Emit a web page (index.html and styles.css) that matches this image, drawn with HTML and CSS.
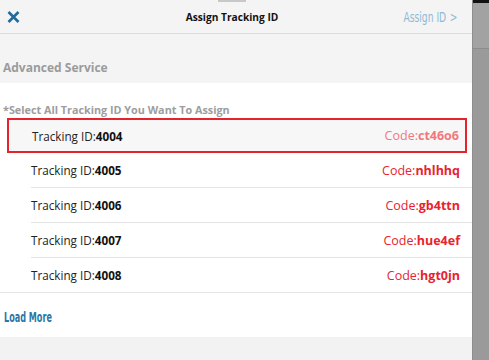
FILE: index.html
```html
<!DOCTYPE html>
<html lang="en">
<head>
    <meta charset="UTF-8">
    <meta name="viewport" content="width=device-width, initial-scale=1.0">
    <title>Assign Tracking ID</title>
    <link rel="stylesheet" href="styles.css">
</head>
<body>
    <div class="screen">
        <div class="panel">
            <div class="grabber"></div>
            <header class="topbar">
                <a href="#" class="close" aria-label="Close">
                    <svg width="13" height="12" viewBox="0 0 13 12">
                        <path d="M1.5 1 L11.5 11 M11.5 1 L1.5 11" stroke="#1f6b9c" stroke-width="2.6" fill="none"/>
                    </svg>
                </a>
                <div class="title">Assign Tracking ID</div>
                <a href="#" class="assign"><span class="narrow">Assign ID <span class="chev">&gt;</span></span></a>
            </header>

            <div class="section">Advanced Service</div>

            <div class="list">
                <div class="hint">*Select All Tracking ID You Want To Assign</div>
                <div class="row selected">
                    <span class="tid">Tracking ID:<b>4004</b></span>
                    <span class="code">Code:<b>ct46o6</b></span>
                </div>
                <div class="row">
                    <span class="tid">Tracking ID:<b>4005</b></span>
                    <span class="code">Code:<b>nhlhhq</b></span>
                </div>
                <div class="row">
                    <span class="tid">Tracking ID:<b>4006</b></span>
                    <span class="code">Code:<b>gb4ttn</b></span>
                </div>
                <div class="row">
                    <span class="tid">Tracking ID:<b>4007</b></span>
                    <span class="code">Code:<b>hue4ef</b></span>
                </div>
                <div class="row last">
                    <span class="tid">Tracking ID:<b>4008</b></span>
                    <span class="code">Code:<b>hgt0jn</b></span>
                </div>
                <a href="#" class="load-more"><span class="narrow">Load More</span></a>
            </div>

            <div class="bottom"></div>
        </div>
        <div class="side">
            <div class="side-top"></div>
            <div class="side-mid"></div>
        </div>
    </div>
</body>
</html>
```

FILE: styles.css
```css
body {
    margin: 0;
    padding: 0;
    font-family: "Open Sans", "Liberation Sans", sans-serif;
    background-color: #f2f2f2;
}
.screen {
    display: flex;
    height: 360px;
    overflow: hidden;
}
.panel {
    flex: 1;
    display: flex;
    flex-direction: column;
    position: relative;
    background-color: #f4f4f4;
}
.grabber {
    position: absolute;
    top: 0;
    left: 218px;
    width: 28px;
    height: 2px;
    background-color: #c8c8c8;
}
.topbar {
    height: 33px;
    border-bottom: 1px solid #dcdcdc;
    display: flex;
    align-items: center;
    justify-content: space-between;
    padding: 0 15px 0 7px;
}
.close {
    display: flex;
    width: 60px;
}
.title {
    font-size: 10.2px;
    font-weight: bold;
    color: #111;
}
.narrow {
    display: inline-block;
    font-family: "DejaVu Sans", sans-serif;
    white-space: nowrap;
}
.assign {
    width: 60px;
    display: flex;
    justify-content: flex-end;
    font-size: 13.5px;
    color: #8fbad3;
    text-decoration: none;
}
.assign .narrow {
    flex-shrink: 0;
    transform: scaleX(0.68);
    transform-origin: right center;
}
.chev {
    margin-left: 1px;
}
.section {
    height: 32px;
    padding: 17px 0 0 3px;
    display: flex;
    align-items: center;
    font-size: 12px;
    font-weight: bold;
    color: #9b9b9b;
}
.list {
    background-color: #fff;
    height: 254px;
}
.hint {
    padding: 19px 0 0 3px;
    height: 16px;
    font-size: 10.8px;
    font-weight: bold;
    color: #9d9d9d;
}
.row {
    height: 34px;
    margin-left: 31px;
    border-bottom: 1px solid #e4e4e4;
    display: flex;
    align-items: center;
    justify-content: space-between;
    padding-right: 12px;
    font-size: 12.5px;
}
.row.selected {
    height: 31px;
    margin: 0 5px 0 7px;
    padding: 0 6px 0 23px;
    border: 2px solid #e4232c;
    background-color: #f7f7f7;
}
.row.selected .code {
    color: #f2787e;
}
.row.last {
    margin-left: 0;
    padding-left: 31px;
}
.tid {
    font-size: 11.7px;
    color: #222;
}
.tid b {
    color: #111;
}
.code {
    color: #e8232e;
}
.load-more {
    display: block;
    padding: 15px 0 0 4px;
    font-weight: bold;
    font-size: 13.5px;
    color: #2a76a6;
    text-decoration: none;
}
.load-more .narrow {
    transform: scaleX(0.6);
    transform-origin: left center;
}
.bottom {
    flex: 1;
    background-color: #f2f2f2;
}
.side {
    width: 16px;
    background-color: #9a9a9a;
    border-left: 1px solid #8e8e8e;
}
.side-top {
    height: 3px;
    background-color: #111;
}
.side-mid {
    height: 45px;
    border-bottom: 1px solid #8c8c8c;
    background-color: #a2a2a2;
}
```
